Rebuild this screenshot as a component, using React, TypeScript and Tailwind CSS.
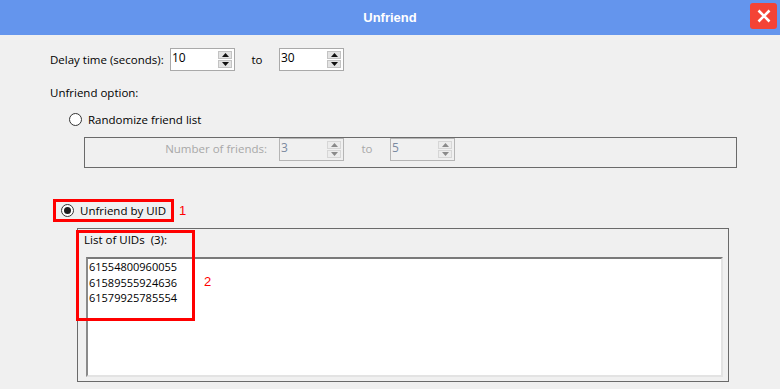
import React from "react";

const Arrow = ({ up, disabled }: { up?: boolean; disabled?: boolean }) => (
  <div
    className={`flex h-[8px] w-[14px] items-center justify-center border ${
      disabled ? "border-[#d6d6d6] bg-[#ececec]" : "border-[#c3c3c3] bg-[#e3e3e3]"
    }`}
  >
    <svg width="7" height="4" viewBox="0 0 7 4">
      <path
        d={up ? "M0 4 L3.5 0 L7 4 Z" : "M0 0 L3.5 4 L7 0 Z"}
        fill={disabled ? "#8a8a8a" : "#111"}
      />
    </svg>
  </div>
);

const Spinner = ({ value, disabled }: { value: string; disabled?: boolean }) => (
  <div
    className={`flex h-[23px] w-[65px] border ${
      disabled ? "h-[21px] border-[#b5b5b5] bg-[#f0f0f0]" : "border-[#a9a9a9] bg-white"
    }`}
  >
    <span
      className={`flex-1 pl-[1px] pt-[1px] text-[12px] leading-[16px] ${
        disabled ? "text-[#7b8aa0]" : "text-black"
      }`}
    >
      {value}
    </span>
    <div className="flex flex-col justify-center gap-px pr-[2px]">
      <Arrow up disabled={disabled} />
      <Arrow disabled={disabled} />
    </div>
  </div>
);

const Radio = ({ checked }: { checked?: boolean }) => (
  <div className="flex h-[13px] w-[13px] items-center justify-center rounded-full border border-[#333] bg-white">
    {checked && <div className="h-[7px] w-[7px] rounded-full bg-[#1e1e1e]" />}
  </div>
);

export default function App() {
  const uids = ["61554800960055", "61589555924636", "61579925785554"];

  return (
    <div className="h-[389px] w-[780px] overflow-hidden bg-[#f0f0f0] font-['Open_Sans',sans-serif] text-[11.5px] text-black">
      {/* title bar */}
      <div className="relative flex h-[35px] items-center justify-center bg-[#6495ed]">
        <span className="font-['Liberation_Sans',sans-serif] text-[13px] font-bold text-white">Unfriend</span>
        <button className="absolute right-[3px] top-[3px] flex h-[26px] w-[27px] items-center justify-center rounded-[3px] bg-[#f44336]">
          <svg width="14" height="14" viewBox="0 0 14 14">
            <path d="M1.5 1.5 L12.5 12.5 M12.5 1.5 L1.5 12.5" stroke="#fff" strokeWidth="2.6" />
          </svg>
        </button>
      </div>

      <div className="flex flex-col pl-[50px]">
        <div className="mt-[13px] flex h-[23px] items-center">
          <span className="w-[120px]">Delay time (seconds):</span>
          <Spinner value="10" />
          <span className="w-[44px] text-center">to</span>
          <Spinner value="30" />
        </div>

        <div className="mt-[14px] leading-[16px]">Unfriend option:</div>

        <div className="ml-[19px] mt-[10px] flex h-[17px] items-center gap-[6px]">
          <Radio />
          <span>Randomize friend list</span>
        </div>

        <div className="ml-[34px] mt-[9px] flex h-[31px] w-[653px] items-start border border-[#6a6a6a]">
          <div className="flex h-[21px] w-[182px] items-center justify-end text-[#a8a8a8]">Number of friends:</div>
          <div className="ml-[12px]">
            <Spinner value="3" disabled />
          </div>
          <div className="flex h-[21px] w-[46px] items-center justify-center text-[#a8a8a8]">to</div>
          <Spinner value="5" disabled />
        </div>

        <div className="mt-[31px] flex items-center">
          <div className="ml-[3px] flex h-[23px] w-[121px] items-center gap-[6px] border-[3px] border-[#ff0000] pl-[5px]">
            <Radio checked />
            <span className="whitespace-nowrap">Unfriend by UID</span>
          </div>
          <span className="ml-[5px] font-['Liberation_Sans',sans-serif] text-[13px] text-[#ff0000]">1</span>
        </div>

        <div className="relative ml-[27px] mt-[6px] h-[154px] w-[652px] border border-[#6a6a6a]">
          <div className="pl-[6px] pt-[3px] leading-[16px]">List of UIDs&nbsp;&nbsp;(3):</div>
          <div className="ml-[8px] mt-[9px] h-[120px] w-[637px] border-2 border-b-[#e3e3e3] border-l-[#8a8a8a] border-r-[#e3e3e3] border-t-[#7a7a7a] bg-white pl-[1px] text-[11px] leading-[15.5px]">
            {uids.map((u) => (
              <div key={u}>{u}</div>
            ))}
          </div>

          {/* annotation overlay */}
          <div className="absolute left-[-2px] top-[1px] h-[91px] w-[119px] border-[3px] border-[#ff0000]" />
          <span className="absolute left-[126px] top-[43px] font-['Liberation_Sans',sans-serif] text-[13px] text-[#ff0000]">
            2
          </span>
        </div>
      </div>
    </div>
  );
}
